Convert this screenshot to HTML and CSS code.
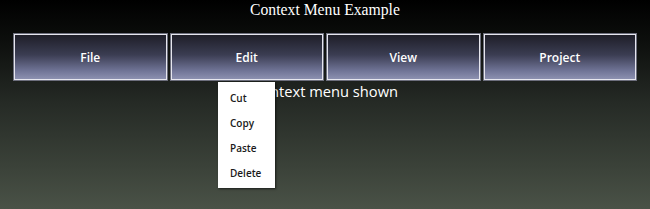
FILE: index.html
```html
<!DOCTYPE html>
<html lang="en">
<head>
    <meta charset="UTF-8">
    <title>Context Menu Example</title>
    <link rel="stylesheet" href="styles.css">
</head>
<body>
<div id="page">
    <h1 class="title">Context Menu Example</h1>
    <ul class="menubar">
        <li><a href="javascript:;">File</a></li>
        <li><a href="javascript:;">Edit</a></li>
        <li><a href="javascript:;">View</a></li>
        <li><a href="javascript:;">Project</a></li>
    </ul>
    <p class="status">Context menu shown</p>
    <ul class="ctx-menu">
        <li>Cut</li>
        <li>Copy</li>
        <li>Paste</li>
        <li>Delete</li>
    </ul>
</div>
</body>
</html>
```

FILE: styles.css
```css
*{
    margin : 0;
    padding: 0;
}
ul{
    list-style-type: none;
}
a{
    color: #fff;
    outline: none;
    text-decoration: none;
}
html, body{
    height: 100%;
}
body{
    background: linear-gradient(#000 0%, #0d0f0d 20%, #262b26 50%, #3b4239 80%, #4a5247 100%);
    font: 16px/1.5 "Open Sans", "DejaVu Sans", sans-serif;
    color: #fff;
    overflow: hidden;
}
#page{
    position: relative;
    height: 100%;
}
.title{
    font: 400 15.7px/18px "Liberation Serif", serif;
    text-align: center;
    padding-top: 1px;
    height: 32px;
}
.menubar{
    display: flex;
    gap: 4px;
    margin: 0 14px 0 14px;
    padding-top: 1px;
}
.menubar li{
    flex: 1;
    height: 46px;
    box-sizing: border-box;
    border: 1px solid #e6e6ee;
    box-shadow: 0 0 0 1px #6c6e7c;
    background: linear-gradient(#1e1e28 0%, #3b3d52 45%, #6e7294 80%, #8c90b0 100%);
}
.menubar li a{
    display: block;
    height: 44px;
    line-height: 46px;
    text-align: center;
    font-weight: 600;
    font-size: 12px;
}
.status{
    text-align: center;
    font-size: 14.7px;
    line-height: 20px;
    margin-top: 1px;
}
.ctx-menu{
    position: absolute;
    left: 218px;
    top: 82px;
    width: 57px;
    padding: 4px 0 2px;
    background: #fff;
    box-shadow: 1px 1px 2px rgba(0,0,0,.6);
}
.ctx-menu li{
    height: 25px;
    line-height: 25px;
    padding-left: 12px;
    color: #1a1a1a;
    font-size: 10px;
    font-weight: 600;
}
```
